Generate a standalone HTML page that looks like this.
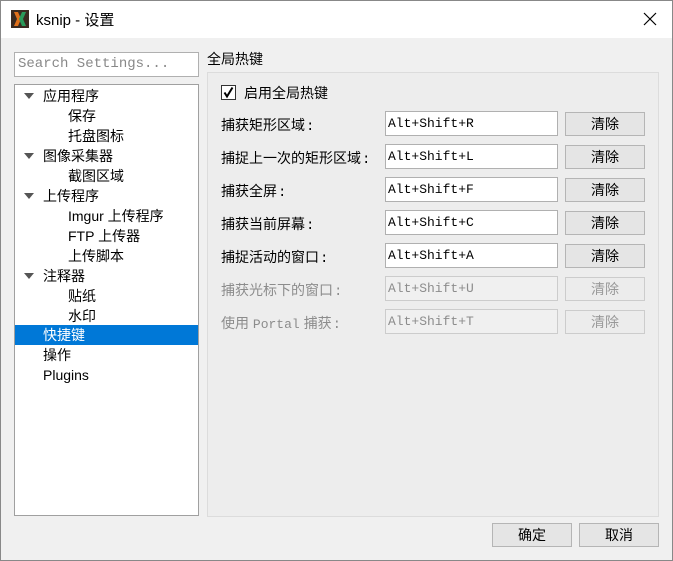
<!DOCTYPE html>
<html><head><meta charset="utf-8"><style>
*{box-sizing:border-box;margin:0;padding:0}
body{width:673px;height:561px;overflow:hidden;background:#f0f0f0;font-family:"Liberation Sans","Noto Sans CJK SC",sans-serif;font-size:14px;color:#000;position:relative}
.a{position:absolute}
.win{left:0;top:0;width:673px;height:561px;border:1px solid #888}
.title{left:1px;top:1px;width:671px;height:37px;background:#fff}
.tree{left:14px;top:84px;width:185px;height:432px;background:#fff;border:1px solid #a0a0a0}
.row{position:absolute;left:0;width:183px;height:20px;line-height:20px;white-space:nowrap}
.arr{position:absolute;left:9px;top:7px;width:0;height:0;border-left:5px solid transparent;border-right:5px solid transparent;border-top:6px solid #555}
.grp{left:207px;top:72px;width:452px;height:445px;border:1px solid #dcdcdc;background:#ededed}
.inp{position:absolute;left:385px;width:173px;height:25px;background:#fff;border:1px solid #b0b0b0;font-family:"Liberation Mono",monospace;font-size:13px;line-height:23px;padding-left:2px}
.btn{position:absolute;left:565px;width:80px;height:24px;background:#e5e5e5;border:1px solid #b5b5b5;text-align:center;line-height:22px}
.lbl{position:absolute;left:221px;line-height:20px}
.c{font-family:"Liberation Mono",monospace;font-size:14px;margin-left:1px}
.dis{color:#8c8c8c}
.inp.dis{background:#f0f0f0;border-color:#ccc}
.btn.dis{background:#ececec;border-color:#ccc;color:#999}
</style></head><body>
<div class="a win"></div>
<div class="a title"></div>
<svg class="a" style="left:11px;top:10px" width="18" height="18"><rect width="18" height="18" fill="#3a2a20"/><path d="M3 2h4l3 7-3 7H3l3-7z" fill="#e0701a"/><path d="M15 2h-4l-3 7 3 7h4l-3-7z" fill="#2a9a5a"/></svg>
<div class="a" style="left:36px;top:9px;font-size:15px">ksnip - 设置</div>
<svg class="a" style="left:643px;top:12px" width="14" height="14"><path d="M1 1L13 13M13 1L1 13" stroke="#000" stroke-width="1.2"/></svg>
<div class="a" style="left:14px;top:52px;width:185px;height:25px;background:#fff;border:1px solid #b0b0b0;font-family:'Liberation Mono',monospace;font-size:14px;color:#888;line-height:23px;padding-left:3px">Search Settings...</div>
<div class="a tree">
<div class="row" style="top:1px"><span class="arr"></span><span style="margin-left:28px">应用程序</span></div>
<div class="row" style="top:21px;padding-left:53px">保存</div>
<div class="row" style="top:41px;padding-left:53px">托盘图标</div>
<div class="row" style="top:61px"><span class="arr"></span><span style="margin-left:28px">图像采集器</span></div>
<div class="row" style="top:81px;padding-left:53px">截图区域</div>
<div class="row" style="top:101px"><span class="arr"></span><span style="margin-left:28px">上传程序</span></div>
<div class="row" style="top:121px;padding-left:53px">Imgur 上传程序</div>
<div class="row" style="top:141px;padding-left:53px">FTP 上传器</div>
<div class="row" style="top:161px;padding-left:53px">上传脚本</div>
<div class="row" style="top:181px"><span class="arr"></span><span style="margin-left:28px">注释器</span></div>
<div class="row" style="top:201px;padding-left:53px">贴纸</div>
<div class="row" style="top:221px;padding-left:53px">水印</div>
<div class="row" style="top:240px;background:#0078d7;color:#fff;padding-left:28px">快捷键</div>
<div class="row" style="top:260px;padding-left:28px">操作</div>
<div class="row" style="top:280px;padding-left:28px">Plugins</div>
</div>
<div class="a" style="left:207px;top:49px">全局热键</div>
<div class="a grp"></div>
<div class="a" style="left:221px;top:85px;width:15px;height:15px;background:#fff;border:1px solid #333"></div>
<svg class="a" style="left:222px;top:86px" width="13" height="13"><path d="M2.5 6.5L5 10.5L10.5 1.5" stroke="#000" stroke-width="2" fill="none"/></svg>
<div class="a" style="left:244px;top:83px">启用全局热键</div>
<div class="lbl" style="top:115px">捕获矩形区域<span class="c">:</span></div><div class="inp" style="top:111px">Alt+Shift+R</div><div class="btn" style="top:112px">清除</div>
<div class="lbl" style="top:148px">捕捉上一次的矩形区域<span class="c">:</span></div><div class="inp" style="top:144px">Alt+Shift+L</div><div class="btn" style="top:145px">清除</div>
<div class="lbl" style="top:181px">捕获全屏<span class="c">:</span></div><div class="inp" style="top:177px">Alt+Shift+F</div><div class="btn" style="top:178px">清除</div>
<div class="lbl" style="top:214px">捕获当前屏幕<span class="c">:</span></div><div class="inp" style="top:210px">Alt+Shift+C</div><div class="btn" style="top:211px">清除</div>
<div class="lbl" style="top:247px">捕捉活动的窗口<span class="c">:</span></div><div class="inp" style="top:243px">Alt+Shift+A</div><div class="btn" style="top:244px">清除</div>
<div class="lbl dis" style="top:280px">捕获光标下的窗口<span class="c">:</span></div><div class="inp dis" style="top:276px">Alt+Shift+U</div><div class="btn dis" style="top:277px">清除</div>
<div class="lbl dis" style="top:313px">使用 <span style="font-family:'Liberation Mono',monospace;font-size:13px">Portal</span> 捕获<span class="c">:</span></div><div class="inp dis" style="top:309px">Alt+Shift+T</div><div class="btn dis" style="top:310px">清除</div>
<div class="btn" style="left:492px;top:523px">确定</div>
<div class="btn" style="left:579px;top:523px">取消</div>
</body></html>
